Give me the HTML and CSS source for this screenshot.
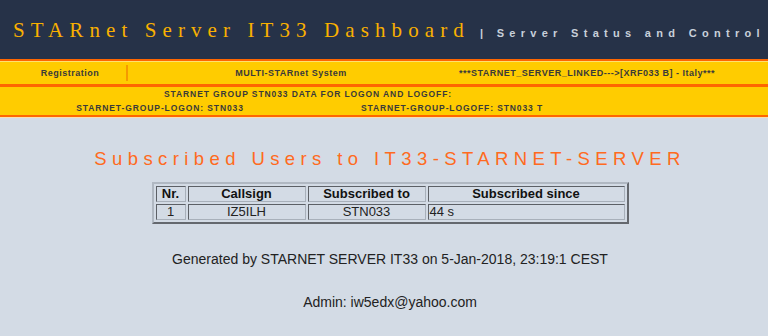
FILE: index.html
```html
<!DOCTYPE html>
<html>
<head>
  <link rel="stylesheet" href="styles.css">
</head>
<body>
  <div class="header">
    <h1 class="title">STARnet Server IT33 Dashboard</h1>
    <span class="subtitle">| Server Status and Control</span>
  </div>

  <div class="nav-bar">
    <div class="nav-item nav-reg">Registration</div>
    <div class="nav-item nav-multi">MULTI-STARnet System</div>
    <div class="nav-item nav-linked">***STARNET_SERVER_LINKED---&gt;[XRF033 B] - Italy***</div>
  </div>

  <div class="group-bar">
    <div class="group-title">STARNET GROUP STN033 DATA FOR LOGON AND LOGOFF:</div>
    <div class="group-cell">STARNET-GROUP-LOGON: STN033</div>
    <div class="group-cell">STARNET-GROUP-LOGOFF: STN033 T</div>
  </div>

  <div class="main">
    <h2 class="users-title">Subscribed Users to IT33-STARNET-SERVER</h2>
    <table class="users">
      <tr>
        <th class="col-nr">Nr.</th>
        <th class="col-call">Callsign</th>
        <th class="col-sub">Subscribed to</th>
        <th class="col-since">Subscribed since</th>
      </tr>
      <tr>
        <td class="center">1</td>
        <td class="center">IZ5ILH</td>
        <td class="center">STN033</td>
        <td>44 s</td>
      </tr>
    </table>

    <p class="info">Generated by STARNET SERVER IT33 on 5-Jan-2018, 23:19:1 CEST</p>
    <p class="info admin">Admin: iw5edx@yahoo.com</p>
  </div>
</body>
</html>
```

FILE: styles.css
```css
body {
  margin: 0;
  padding: 0;
  background: #D3DBE5;
  font-family: "Liberation Sans", Arial, sans-serif;
  overflow: hidden;
}
.header {
  background: #263248;
  height: 59px;
  display: flex;
  align-items: baseline;
  padding: 18px 0 0 13px;
  box-sizing: border-box;
  white-space: nowrap;
  overflow: hidden;
}
.title {
  margin: 0;
  font-family: "Liberation Serif", "Times New Roman", serif;
  font-weight: normal;
  font-size: 21px;
  letter-spacing: 6.1px;
  color: #F9B000;
}
.subtitle {
  margin-left: 10px;
  font-size: 11px;
  font-weight: bold;
  letter-spacing: 5.3px;
  color: #C8D0DA;
}
.nav-bar {
  display: flex;
  background: #FFCC00;
  border-top: 2px solid #FF6600;
  border-bottom: 3px solid #FF6600;
  height: 23px;
  padding-left: 12px;
  box-shadow: inset 0 1px 0 #FFE070;
}
.nav-item {
  display: flex;
  align-items: center;
  justify-content: center;
  font-size: 9px;
  font-weight: bold;
  letter-spacing: 0.5px;
  color: #3A3A3A;
}
.nav-reg {
  width: 116px;
  position: relative;
}
.nav-reg::after {
  content: "";
  position: absolute;
  right: 0;
  top: 4px;
  bottom: 3px;
  width: 2px;
  background: #F59A00;
}
.nav-multi {
  width: 326px;
}
.nav-linked {
  width: 266px;
}
.group-bar {
  display: grid;
  grid-template-columns: 320px 264px;
  background: #FFCC00;
  border-bottom: 2px solid #FF6600;
  box-shadow: 0 1px 0 #F8E0B0;
  font-size: 8.5px;
  font-weight: bold;
  letter-spacing: 0.9px;
  color: #3A3A3A;
  line-height: 14px;
  white-space: nowrap;
}
.group-title {
  grid-column: 1 / 3;
  text-align: center;
  padding-left: 32px;
}
.group-cell {
  text-align: center;
}
.main {
  display: flex;
  flex-direction: column;
  align-items: center;
  padding: 31px 0 0 12px;
}
.users-title {
  margin: 0 0 12px;
  font-weight: normal;
  font-size: 18.5px;
  letter-spacing: 5.4px;
  color: #FF6A20;
}
.users {
  border: 2px outset #B0B8C2;
  border-spacing: 2px;
  font-size: 13px;
  color: #222;
}
.users th, .users td {
  border: 1px inset #A8B0BA;
  padding: 0 1px;
  height: 14px;
  line-height: 14px;
}
.users th {
  color: #111;
}
.col-nr { width: 26px; }
.col-call { width: 114px; }
.col-sub { width: 114px; }
.col-since { width: 193px; }
.center {
  text-align: center;
}
.info {
  margin: 27px 0 0;
  font-size: 14px;
  color: #222;
}
.admin {
  margin-top: 27px;
}
```
